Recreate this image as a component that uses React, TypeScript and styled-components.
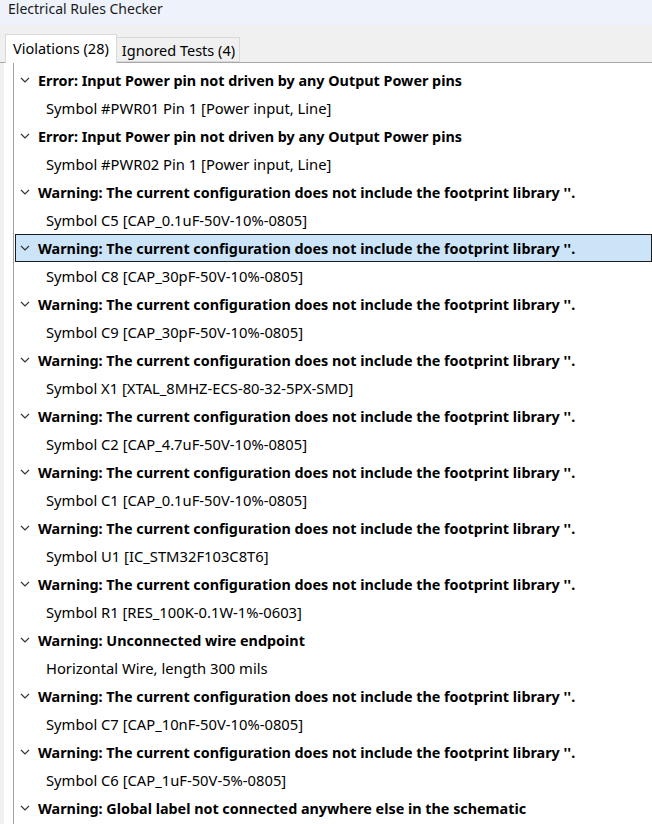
import React from "react";
import styled, { createGlobalStyle } from "styled-components";

const Global = createGlobalStyle`
  html, body { margin: 0; padding: 0; background: #f0f0f0; }
  body { font-family: "Noto Sans", "Noto Sans CJK KR", sans-serif; color: #000; overflow: hidden; }
`;

const Window = styled.div`
  width: 652px;
  height: 824px;
  display: flex;
  flex-direction: column;
  background: #f0f0f0;
  overflow: hidden;
`;

const TitleBar = styled.div`
  height: 25px;
  flex: none;
  box-sizing: border-box;
  background: #eef2fa;
  font-size: 14px;
  line-height: 17px;
  padding: 0 0 0 8px;
  display: flex;
  align-items: flex-start;
  color: #1a1a1a;
`;

const TabStrip = styled.div`
  display: flex;
  align-items: flex-end;
  height: 38px;
  padding: 0 0 0 5px;
  flex: none;
  border-bottom: 1px solid #a7a7a7;
  box-sizing: border-box;
`;

const Tab = styled.div<{ $active?: boolean }>`
  box-sizing: border-box;
  height: ${(p) => (p.$active ? "29px" : "25px")};
  margin-bottom: ${(p) => (p.$active ? "-1px" : "0")};
  padding: ${(p) => (p.$active ? "0 7px 2px 7px" : "0 4px 0 5px")};
  display: flex;
  align-items: center;
  font-size: 14.5px;
  background: ${(p) => (p.$active ? "#ffffff" : "#f0f0f0")};
  border: 1px solid #d9d9d9;
  border-bottom: ${(p) => (p.$active ? "none" : "1px solid #d9d9d9")};
  border-left: ${(p) => (p.$active ? "1px solid #d9d9d9" : "none")};
  position: relative;
  z-index: ${(p) => (p.$active ? 1 : 0)};
`;

const Body = styled.div`
  flex: 1;
  display: flex;
  background: #f0f0f0;
  padding-left: 4px;
`;

const Panel = styled.div`
  flex: 1;
  background: #fff;
  padding-left: 9px;
  display: flex;
`;

const List = styled.div`
  flex: 1;
  border-left: 1px solid #a0a0a0;
  padding-top: 3px;
  display: flex;
  flex-direction: column;
`;

const HeaderRow = styled.div<{ $selected?: boolean }>`
  box-sizing: border-box;
  height: 28px;
  margin-left: 1px;
  display: flex;
  align-items: center;
  font-size: 14.35px;
  font-weight: 700;
  white-space: nowrap;
  background: ${(p) => (p.$selected ? "#cce4f7" : "transparent")};
  border: 1px solid ${(p) => (p.$selected ? "#1c1c1c" : "transparent")};
  padding-left: 4px;
`;

const Chevron = styled.svg`
  width: 10px;
  height: 10px;
  flex: none;
  margin-right: 8px;
`;

const ChildRow = styled.div`
  height: 28px;
  display: flex;
  align-items: center;
  padding-left: 32px;
  font-size: 14.75px;
  white-space: nowrap;
`;

type Item = { head: string; child: string; selected?: boolean };

const W = "Warning: The current configuration does not include the footprint library ''.";

const items: Item[] = [
  { head: "Error: Input Power pin not driven by any Output Power pins", child: "Symbol #PWR01 Pin 1 [Power input, Line]" },
  { head: "Error: Input Power pin not driven by any Output Power pins", child: "Symbol #PWR02 Pin 1 [Power input, Line]" },
  { head: W, child: "Symbol C5 [CAP_0.1uF-50V-10%-0805]" },
  { head: W, child: "Symbol C8 [CAP_30pF-50V-10%-0805]", selected: true },
  { head: W, child: "Symbol C9 [CAP_30pF-50V-10%-0805]" },
  { head: W, child: "Symbol X1 [XTAL_8MHZ-ECS-80-32-5PX-SMD]" },
  { head: W, child: "Symbol C2 [CAP_4.7uF-50V-10%-0805]" },
  { head: W, child: "Symbol C1 [CAP_0.1uF-50V-10%-0805]" },
  { head: W, child: "Symbol U1 [IC_STM32F103C8T6]" },
  { head: W, child: "Symbol R1 [RES_100K-0.1W-1%-0603]" },
  { head: "Warning: Unconnected wire endpoint", child: "Horizontal Wire, length 300 mils" },
  { head: W, child: "Symbol C7 [CAP_10nF-50V-10%-0805]" },
  { head: W, child: "Symbol C6 [CAP_1uF-50V-5%-0805]" },
  { head: "Warning: Global label not connected anywhere else in the schematic", child: "" },
];

const ChevronIcon = () => (
  <Chevron viewBox="0 0 10 10">
    <path d="M1 3 L5 7 L9 3" fill="none" stroke="#333" strokeWidth="1.2" />
  </Chevron>
);

export default function App() {
  return (
    <Window>
      <Global />
      <TitleBar>
        <span>Electrical Rules Checker</span>
      </TitleBar>
      <TabStrip>
        <Tab $active>Violations (28)</Tab>
        <Tab>Ignored Tests (4)</Tab>
      </TabStrip>
      <Body>
        <Panel>
          <List>
            {items.map((it, i) => (
              <React.Fragment key={i}>
                <HeaderRow $selected={it.selected}>
                  <ChevronIcon />
                  {it.head}
                </HeaderRow>
                {it.child && <ChildRow>{it.child}</ChildRow>}
              </React.Fragment>
            ))}
          </List>
        </Panel>
      </Body>
    </Window>
  );
}
